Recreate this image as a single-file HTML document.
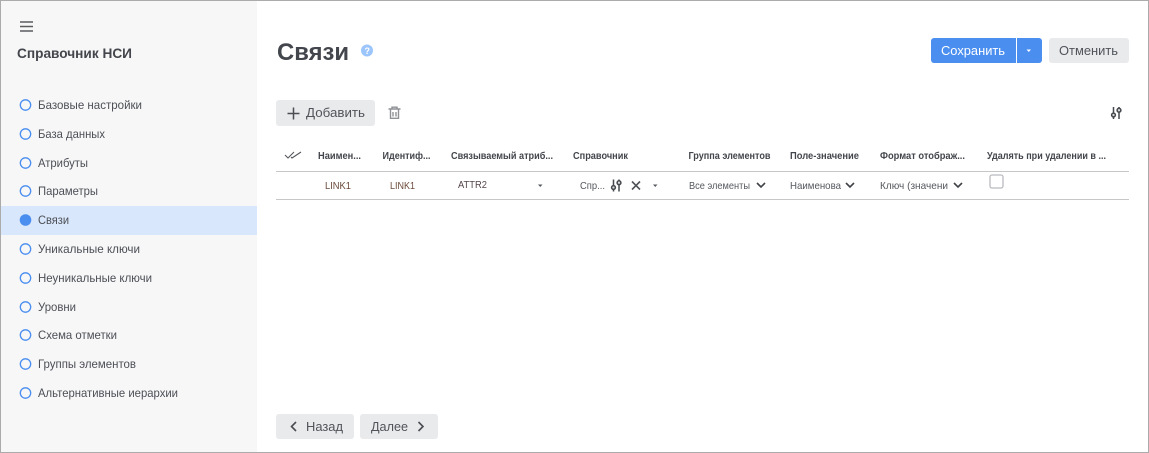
<!DOCTYPE html>
<html lang="ru"><head><meta charset="utf-8"><style>
html,body{margin:0;padding:0;background:#fff}
svg{display:block}
text{font-family:"Liberation Sans",sans-serif;fill:#4a4d52;font-size:12px}
.n{font-size:12px;fill:#4c4f56}
.h{font-size:10px;font-weight:bold;fill:#43464c}
.c{font-size:10.500px;fill:#55585e}
.l{font-size:10.500px;fill:#6b4a3a}
.b{font-size:13px;fill:#505359}
</style></head><body>
<svg width="1149" height="453" viewBox="0 0 1149 453" xmlns="http://www.w3.org/2000/svg">
<defs>
<g id="eq" fill="none" stroke="#45484d" stroke-width="1.500"><path d="M2.500 0V12M8 0V12"/><circle cx="2.500" cy="8" r="1.900" fill="#d8d8d8"/><circle cx="8" cy="3.200" r="1.900" fill="#d8d8d8"/></g>
<path id="chev" d="M0 0L4 4L8 0" fill="none" stroke="#3f4247" stroke-width="1.600"/>
</defs>
<rect width="1149" height="453" fill="#fff"/>
<rect x="1" y="1" width="256" height="451" fill="#f7f7f7"/>
<rect x="1" y="206" width="256" height="29" fill="#d8e7fb"/>
<path d="M20 22H33M20 26.500H33M20 31H33" stroke="#5a5c60" stroke-width="1.500"/>
<text x="17" y="58" textLength="115" lengthAdjust="spacingAndGlyphs" style="font-size:14px;font-weight:bold;fill:#43464c">Справочник НСИ</text>

<g fill="none" stroke="#4a8ef0" stroke-width="1.300">
<circle cx="25.500" cy="105" r="5.200"/><circle cx="25.500" cy="134" r="5.200"/><circle cx="25.500" cy="163" r="5.200"/><circle cx="25.500" cy="191" r="5.200"/>
<circle cx="25.500" cy="249" r="5.200"/><circle cx="25.500" cy="278" r="5.200"/><circle cx="25.500" cy="307" r="5.200"/><circle cx="25.500" cy="335" r="5.200"/><circle cx="25.500" cy="364" r="5.200"/><circle cx="25.500" cy="393" r="5.200"/>
</g>
<circle cx="25.500" cy="220" r="5.800" fill="#4a8ef0"/>
<text class="n" x="38" y="109" textLength="104" lengthAdjust="spacingAndGlyphs">Базовые настройки</text>
<text class="n" x="38" y="138" textLength="67" lengthAdjust="spacingAndGlyphs">База данных</text>
<text class="n" x="38" y="167" textLength="50" lengthAdjust="spacingAndGlyphs">Атрибуты</text>
<text class="n" x="38" y="195" textLength="60" lengthAdjust="spacingAndGlyphs">Параметры</text>
<text class="n" x="38" y="224" textLength="31" lengthAdjust="spacingAndGlyphs">Связи</text>
<text class="n" x="38" y="253" textLength="102" lengthAdjust="spacingAndGlyphs">Уникальные ключи</text>
<text class="n" x="38" y="282" textLength="114" lengthAdjust="spacingAndGlyphs">Неуникальные ключи</text>
<text class="n" x="38" y="311" textLength="38" lengthAdjust="spacingAndGlyphs">Уровни</text>
<text class="n" x="38" y="339" textLength="79" lengthAdjust="spacingAndGlyphs">Схема отметки</text>
<text class="n" x="38" y="368" textLength="98" lengthAdjust="spacingAndGlyphs">Группы элементов</text>
<text class="n" x="38" y="397" textLength="140" lengthAdjust="spacingAndGlyphs">Альтернативные иерархии</text>

<text x="277" y="60" textLength="72" lengthAdjust="spacingAndGlyphs" style="font-size:24px;font-weight:bold;fill:#43464c">Связи</text>
<circle cx="367" cy="50.500" r="6" fill="#9cc6fb"/>
<text x="364.500" y="54" style="font-size:9px;font-weight:bold;fill:#fff">?</text>

<rect x="931" y="38" width="85" height="25" rx="3" fill="#4a8ef0"/>
<rect x="1017" y="38" width="25" height="25" rx="3" fill="#4a8ef0"/>
<rect x="1014" y="38" width="2" height="25" fill="#4a8ef0"/><rect x="1017" y="38" width="3" height="25" fill="#4a8ef0"/>
<text x="941" y="55" textLength="64" lengthAdjust="spacingAndGlyphs" style="font-size:13px;fill:#fff">Сохранить</text>
<path d="M1026.500 49.500H1031L1028.750 52Z" fill="#fff"/>
<rect x="1049" y="38" width="80" height="25" rx="3" fill="#e9eaec"/>
<text class="b" x="1059" y="55" textLength="59" lengthAdjust="spacingAndGlyphs">Отменить</text>

<rect x="276" y="100" width="99" height="26" rx="3" fill="#e9eaec"/>
<path d="M293.500 107.500V119.500M287.500 113.500H299.500" stroke="#4a4d52" stroke-width="1.500"/>
<text class="b" x="306" y="117" textLength="59" lengthAdjust="spacingAndGlyphs">Добавить</text>
<g fill="none" stroke="#8f9195" stroke-width="1.400"><path d="M388.500 109H400.500M392 109V107.200H397V109M390.500 109.500V118.300H398.500V109.500"/><path d="M393 112V116.500M396 112V116.500"/></g>
<use href="#eq" x="1111" y="107"/>

<path d="M285 155L288 158L294 152M291 157L292 158L301 152" fill="none" stroke="#55585e" stroke-width="1.100"/>
<text class="h" x="318" y="159" textLength="43" lengthAdjust="spacingAndGlyphs">Наимен...</text>
<text class="h" x="382.500" y="159" textLength="48" lengthAdjust="spacingAndGlyphs">Идентиф...</text>
<text class="h" x="451" y="159" textLength="102" lengthAdjust="spacingAndGlyphs">Связываемый атриб...</text>
<text class="h" x="573" y="159" textLength="55" lengthAdjust="spacingAndGlyphs">Справочник</text>
<text class="h" x="688.500" y="159" textLength="82" lengthAdjust="spacingAndGlyphs">Группа элементов</text>
<text class="h" x="790" y="159" textLength="69" lengthAdjust="spacingAndGlyphs">Поле-значение</text>
<text class="h" x="880" y="159" textLength="85" lengthAdjust="spacingAndGlyphs">Формат отображ...</text>
<text class="h" x="987" y="159" textLength="119" lengthAdjust="spacingAndGlyphs">Удалять при удалении в ...</text>

<rect x="276" y="171" width="853" height="1" fill="#c6c7c9"/>
<rect x="276" y="199" width="853" height="1" fill="#c6c7c9"/>

<text class="l" x="325" y="189" textLength="26" lengthAdjust="spacingAndGlyphs">LINK1</text>
<text class="l" x="390" y="189" textLength="25" lengthAdjust="spacingAndGlyphs">LINK1</text>
<text class="l" x="458" y="188" textLength="29" lengthAdjust="spacingAndGlyphs" style="fill:#55454a">ATTR2</text>
<path d="M538 184.500H542.500L540.250 187Z" fill="#55585e"/>
<text class="c" x="580" y="189" textLength="25" lengthAdjust="spacingAndGlyphs">Спр...</text>
<use href="#eq" x="611" y="179.500"/>
<path d="M632 181.500L640 189.500M640 181.500L632 189.500" stroke="#4f5257" stroke-width="1.600"/>
<path d="M653 184.500H657.500L655.250 187Z" fill="#55585e"/>
<text class="c" x="689" y="189" textLength="61" lengthAdjust="spacingAndGlyphs">Все элементы</text>
<use href="#chev" x="757" y="183"/>
<text class="c" x="790" y="189" textLength="51" lengthAdjust="spacingAndGlyphs">Наименова</text>
<use href="#chev" x="846" y="183"/>
<text class="c" x="880" y="189" textLength="68" lengthAdjust="spacingAndGlyphs">Ключ (значени</text>
<use href="#chev" x="954" y="183"/>
<rect x="990" y="175" width="13" height="13" rx="2" fill="#fff" stroke="#b9bbbf" stroke-width="1.300"/>

<rect x="276" y="414" width="78" height="25" rx="3" fill="#e9eaec"/>
<path d="M296 422L291.500 426.500L296 431" fill="none" stroke="#4a4d52" stroke-width="1.600"/>
<text class="b" x="306" y="431" textLength="37" lengthAdjust="spacingAndGlyphs">Назад</text>
<rect x="360" y="414" width="78" height="25" rx="3" fill="#e9eaec"/>
<text class="b" x="371" y="431" textLength="37" lengthAdjust="spacingAndGlyphs">Далее</text>
<path d="M418.500 422L423 426.500L418.500 431" fill="none" stroke="#4a4d52" stroke-width="1.600"/>

<rect x="0.500" y="0.500" width="1148" height="452" fill="none" stroke="#ababab" stroke-width="1"/>
</svg>
</body></html>
